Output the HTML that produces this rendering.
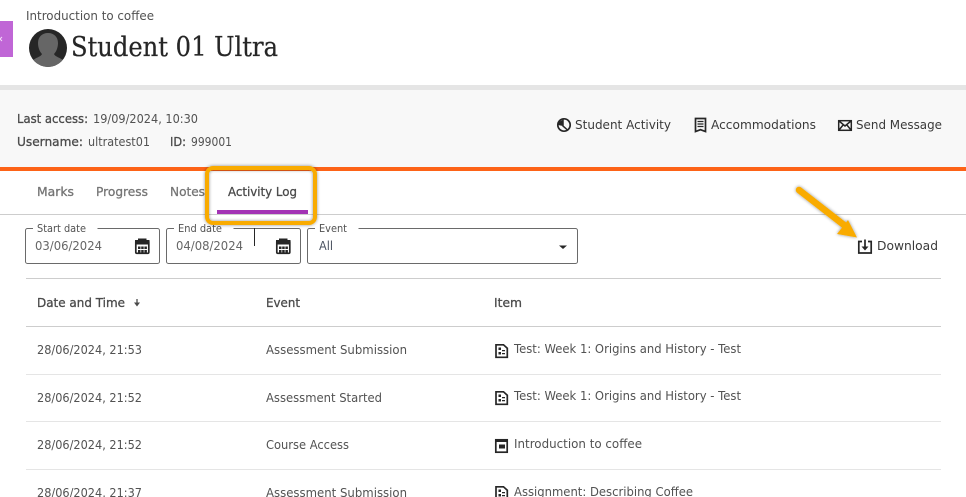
<!DOCTYPE html>
<html><head><meta charset="utf-8"><style>
html,body{margin:0;padding:0;background:#fff;width:966px;height:497px;overflow:hidden}
svg{display:block}
text{font-family:"DejaVu Sans","Liberation Sans",sans-serif;font-size:12.8px;fill:#525252;white-space:pre}
.b{stroke:#4a4a4a;stroke-width:.3px;fill:#4a4a4a}
.g{stroke:#757575;stroke-width:.3px;fill:#757575}
.d{fill:#3a3a3a}
.m{fill:#666}
.sm{font-size:11px;fill:#525252}
</style></head><body>
<svg width="966" height="497" viewBox="0 0 966 497" xmlns="http://www.w3.org/2000/svg">
<defs><filter id="s" x="-20%" y="-20%" width="140%" height="140%"><feDropShadow dx="0" dy="0" stdDeviation="1.500" flood-color="#000" flood-opacity=".45"/></filter></defs>
<rect x="0" y="21" width="13" height="36" fill="#c066d6"/>
<path d="M2 37l-2 2 2 2" fill="none" stroke="#f3dcf7" stroke-width="1"/>
<text x="26" y="20" textLength="128" lengthAdjust="spacingAndGlyphs">Introduction to coffee</text>
<circle cx="48" cy="48" r="19" fill="#262626"/>
<clipPath id="av"><circle cx="48" cy="48" r="19"/></clipPath>
<g clip-path="url(#av)" fill="#666"><path d="M48 33c6 0 10 4 10 10 0 5-2 9-4 11 1 3 8 4 11 8v6H31v-6c3-4 10-5 11-8-2-2-4-6-4-11 0-6 4-10 10-10z"/></g>
<text x="71" y="56" textLength="207" lengthAdjust="spacingAndGlyphs" style="font-family:'DejaVu Serif','Liberation Serif',serif;font-size:27px;fill:#262626;stroke:#262626;stroke-width:.25px">Student 01 Ultra</text>

<rect x="0" y="85" width="966" height="5" fill="#e5e5e5"/>
<rect x="0" y="90" width="966" height="77" fill="#f8f8f8"/>
<rect x="0" y="167" width="966" height="4" fill="#fd6317"/>
<text x="17" y="123" textLength="71" lengthAdjust="spacingAndGlyphs" class="b">Last access:</text>
<text x="93" y="123" textLength="105" lengthAdjust="spacingAndGlyphs">19/09/2024, 10:30</text>
<text x="17" y="146" textLength="66" lengthAdjust="spacingAndGlyphs" class="b">Username:</text>
<text x="88" y="146" textLength="62" lengthAdjust="spacingAndGlyphs">ultratest01</text>
<text x="170" y="146" textLength="16" lengthAdjust="spacingAndGlyphs" class="b">ID:</text>
<text x="191" y="146" textLength="41" lengthAdjust="spacingAndGlyphs">999001</text>

<circle cx="564" cy="125" r="6.200" fill="none" stroke="#262626" stroke-width="1.700"/>
<path d="M563 119.500v6.500l4.500 4" fill="none" stroke="#262626" stroke-width="1.500"/>
<path d="M563 120a5.500 5.500 0 0 0-5 5l5 1z" fill="#262626"/>
<text x="575" y="129" textLength="96" lengthAdjust="spacingAndGlyphs" class="d">Student Activity</text>
<path d="M695.500 118.500h10v13l-5-1.800-5 1.800z" fill="none" stroke="#262626" stroke-width="1.700"/>
<path d="M697.500 121.500h6M697.500 124h6M697.500 126.500h6" stroke="#262626" stroke-width="1.200"/>
<text x="711" y="129" textLength="105" lengthAdjust="spacingAndGlyphs" class="d">Accommodations</text>
<rect x="838.700" y="120.700" width="12.600" height="9.600" fill="none" stroke="#262626" stroke-width="1.500"/>
<path d="M839 121l6 5 6-5M839 130l4.500-5.500M851 130l-4.500-5.500" fill="none" stroke="#262626" stroke-width="1.500"/>
<text x="856" y="129" textLength="86" lengthAdjust="spacingAndGlyphs" class="d">Send Message</text>

<rect x="0" y="214" width="966" height="1" fill="#cdcdcd"/>
<text x="37" y="196" textLength="37" lengthAdjust="spacingAndGlyphs" class="g">Marks</text>
<text x="96" y="196" textLength="52" lengthAdjust="spacingAndGlyphs" class="g">Progress</text>
<text x="170" y="196" textLength="35" lengthAdjust="spacingAndGlyphs" class="g">Notes</text>
<text x="228" y="196" textLength="69" lengthAdjust="spacingAndGlyphs" class="b">Activity Log</text>
<rect x="217" y="210" width="91" height="4" fill="#a333b5"/>

<g fill="none" stroke="#6a6a6a" stroke-width="1">
<path d="M33 228.500h-5.500a2 2 0 0 0-2 2v31a2 2 0 0 0 2 2h130a2 2 0 0 0 2-2v-31a2 2 0 0 0-2-2h-60"/>
<path d="M174 228.500h-5.500a2 2 0 0 0-2 2v31a2 2 0 0 0 2 2h130a2 2 0 0 0 2-2v-31a2 2 0 0 0-2-2h-65"/>
<path d="M315 228.500h-5.500a2 2 0 0 0-2 2v31a2 2 0 0 0 2 2h266a2 2 0 0 0 2-2v-31a2 2 0 0 0-2-2h-217"/>
</g>
<rect x="254" y="228" width="1" height="18" fill="#262626"/>
<text x="37" y="232" textLength="49" lengthAdjust="spacingAndGlyphs" class="sm">Start date</text>
<text x="178" y="232" textLength="44" lengthAdjust="spacingAndGlyphs" class="sm">End date</text>
<text x="319" y="232" textLength="28" lengthAdjust="spacingAndGlyphs" class="sm">Event</text>
<text x="35" y="250" textLength="67" lengthAdjust="spacingAndGlyphs" class="m">03/06/2024</text>
<text x="176" y="250" textLength="67" lengthAdjust="spacingAndGlyphs" class="m">04/08/2024</text>
<text x="319" y="250" textLength="14" lengthAdjust="spacingAndGlyphs" style="fill:#4a5260">All</text>
<g>
<rect x="135.800" y="240.800" width="13" height="12.500" rx="1" fill="none" stroke="#262626" stroke-width="1.700"/>
<rect x="135" y="240" width="14.500" height="4.500" fill="#262626"/><rect x="138" y="238.500" width="8.500" height="2" fill="#262626"/>
<path d="M138 246.500h2.500v2.500h-2.500zM141.200 246.500h2.500v2.500h-2.500zM144.400 246.500h2.500v2.500h-2.500zM138 250h2.500v2.500h-2.500zM141.200 250h2.500v2.500h-2.500zM144.400 250h2.500v2.500h-2.500z" fill="#262626"/>
</g>
<g transform="translate(141 0)">
<rect x="135.800" y="240.800" width="13" height="12.500" rx="1" fill="none" stroke="#262626" stroke-width="1.700"/>
<rect x="135" y="240" width="14.500" height="4.500" fill="#262626"/><rect x="138" y="238.500" width="8.500" height="2" fill="#262626"/>
<path d="M138 246.500h2.500v2.500h-2.500zM141.200 246.500h2.500v2.500h-2.500zM144.400 246.500h2.500v2.500h-2.500zM138 250h2.500v2.500h-2.500zM141.200 250h2.500v2.500h-2.500zM144.400 250h2.500v2.500h-2.500z" fill="#262626"/>
</g>
<path d="M559 245.500h8l-4 3.500z" fill="#262626"/>

<path d="M862 241.500h-3.200v11.500h12.400v-11.500H868" fill="none" stroke="#262626" stroke-width="1.700"/>
<path d="M865 239.500v9" stroke="#262626" stroke-width="1.700"/><path d="M861.500 246.500h7l-3.500 4z" fill="#262626"/>
<text x="877" y="250" textLength="61" lengthAdjust="spacingAndGlyphs" class="d">Download</text>

<g filter="url(#s)">
<path d="M799 190L844 225" stroke="#f9ab00" stroke-width="6.500" stroke-linecap="round" fill="none"/>
<path d="M857 237.500L837 234 848 220z" fill="#f9ab00"/>
<rect x="207" y="168" width="108" height="55" rx="6" fill="none" stroke="#f9ab00" stroke-width="4"/>
</g>

<rect x="26" y="278" width="915" height="1" fill="#cdcdcd"/>
<text x="37" y="307" textLength="88" lengthAdjust="spacingAndGlyphs" class="b">Date and Time</text>
<path d="M137 299v6" stroke="#4a4a4a" stroke-width="1.300"/><path d="M134 302.500h6l-3 4z" fill="#4a4a4a"/>
<text x="266" y="307" textLength="34" lengthAdjust="spacingAndGlyphs" class="b">Event</text>
<text x="494" y="307" textLength="28" lengthAdjust="spacingAndGlyphs" class="b">Item</text>
<rect x="26" y="326" width="915" height="1" fill="#cdcdcd"/>
<rect x="26" y="374" width="915" height="1" fill="#e5e5e5"/>
<rect x="26" y="421" width="915" height="1" fill="#e5e5e5"/>
<rect x="26" y="469" width="915" height="1" fill="#e5e5e5"/>

<text x="37" y="354" textLength="105" lengthAdjust="spacingAndGlyphs">28/06/2024, 21:53</text>
<text x="266" y="354" textLength="141" lengthAdjust="spacingAndGlyphs">Assessment Submission</text>
<text x="514" y="353" textLength="227" lengthAdjust="spacingAndGlyphs">Test: Week 1: Origins and History - Test</text>
<text x="37" y="402" textLength="105" lengthAdjust="spacingAndGlyphs">28/06/2024, 21:52</text>
<text x="266" y="402" textLength="116" lengthAdjust="spacingAndGlyphs">Assessment Started</text>
<text x="514" y="400" textLength="227" lengthAdjust="spacingAndGlyphs">Test: Week 1: Origins and History - Test</text>
<text x="37" y="449" textLength="105" lengthAdjust="spacingAndGlyphs">28/06/2024, 21:52</text>
<text x="266" y="449" textLength="83" lengthAdjust="spacingAndGlyphs">Course Access</text>
<text x="514" y="448" textLength="128" lengthAdjust="spacingAndGlyphs">Introduction to coffee</text>
<text x="37" y="497" textLength="105" lengthAdjust="spacingAndGlyphs">28/06/2024, 21:37</text>
<text x="266" y="497" textLength="141" lengthAdjust="spacingAndGlyphs">Assessment Submission</text>
<text x="514" y="496" textLength="179" lengthAdjust="spacingAndGlyphs">Assignment: Describing Coffee</text>

<g fill="none" stroke="#262626" stroke-width="1.700">
<path d="M496 344.800h7.500l3.800 3.500v9h-11.300z"/>
<path d="M496 391.800h7.500l3.800 3.500v9h-11.300z"/>
<path d="M496 486.800h7.500l3.800 3.500v9h-11.300z"/>
<rect x="495.800" y="439.800" width="11.400" height="12.400"/>
</g>
<path d="M498.500 347.500h2.500v2.500h-2.500zM502 350h3v1.200h-3zM498.500 352h2.500v2.500h-2.500zM502 353h3v1.200h-3z" fill="#262626"/>
<path d="M498.500 394.500h2.500v2.500h-2.500zM502 397h3v1.200h-3zM498.500 399h2.500v2.500h-2.500zM502 400h3v1.200h-3z" fill="#262626"/>
<path d="M498.500 489.500h2.500v2.500h-2.500zM502 492h3v1.200h-3zM498.500 494h2.500v2.500h-2.500zM502 495h3v1.200h-3z" fill="#262626"/>
<path d="M495 439h13v3h-13zM499 444.500h6v4h-6z" fill="#262626"/>
</svg>
</body></html>
